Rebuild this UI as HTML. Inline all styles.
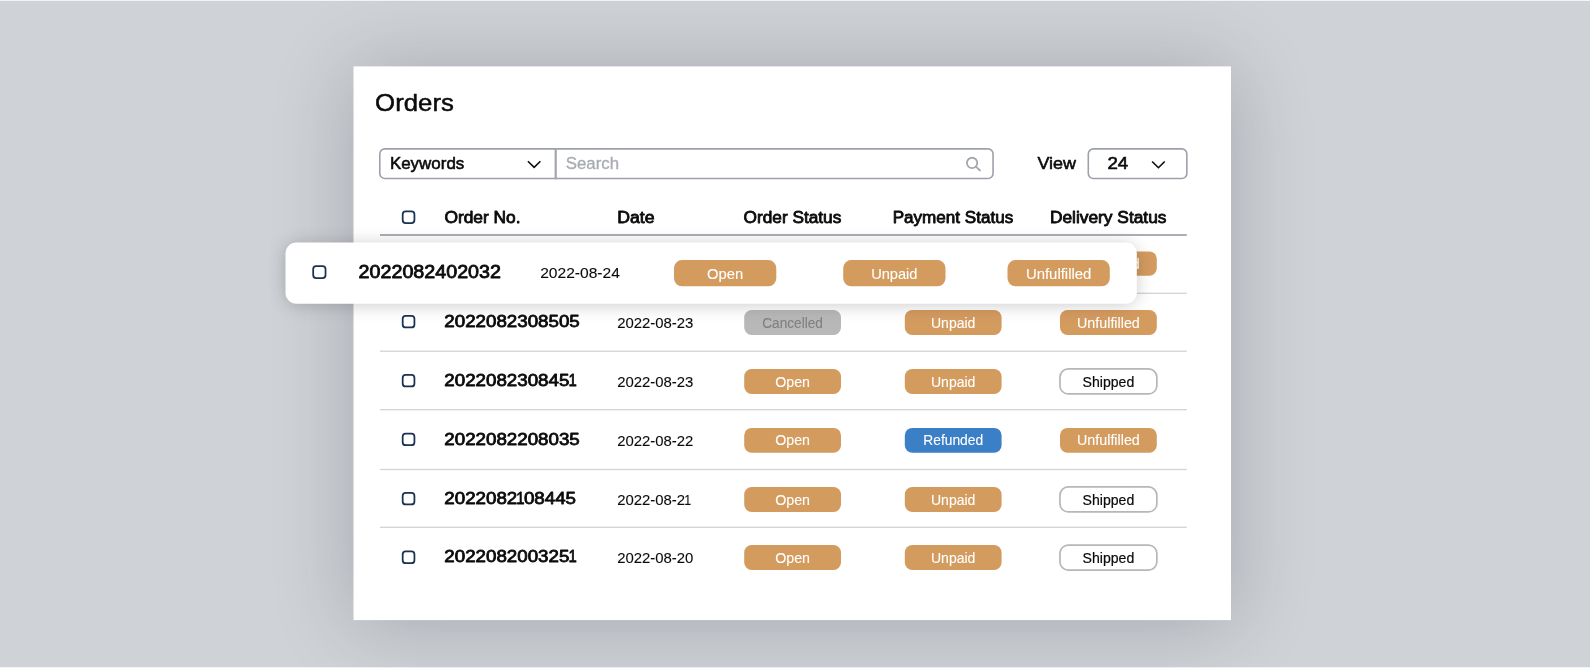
<!DOCTYPE html>
<html lang="en">
<head>
<meta charset="utf-8">
<title>Orders</title>
<style>
*{box-sizing:border-box;margin:0;padding:0}
html,body{width:1590px;height:668px;overflow:hidden}
body{background:#cfd2d6;font-family:"Liberation Sans",Arial,sans-serif;position:relative}
.card{position:absolute;left:354px;top:67px;width:877px;height:553px;background:#fff;box-shadow:0 3px 76px rgba(20,25,40,.225)}
.float{position:absolute;left:286px;top:243px;width:850px;height:60px;border-radius:11px;background:#fff;box-shadow:0 1.5px 18px rgba(0,0,0,.22)}
.edge{position:absolute;left:0;width:1590px;height:1px;background:#f2f3f5}
svg{will-change:transform;position:absolute;left:0;top:0;width:1590px;height:668px;font-family:"Liberation Sans",Arial,sans-serif;overflow:visible}
text{white-space:pre}
</style>
</head>
<body>
<div class="edge" style="top:0"></div><div class="edge" style="top:667px"></div>
<div class="card"></div>
<svg viewBox="0 0 1590 668" width="1590" height="668">
<rect x="353.5" y="66.4" width="877.5" height="553.7" fill="#fff"/>
<text x="375.1" y="110.65" font-size="24.5" fill="#0b0b0b" textLength="78.8" lengthAdjust="spacingAndGlyphs" stroke="#0b0b0b" stroke-width="0.5" stroke-linejoin="round">Orders</text>
<rect x="379.8" y="148.9" width="613.25" height="29.60" rx="5" fill="#fff" stroke="#9da1a9" stroke-width="1.6"/>
<rect x="554.6" y="148.1" width="2.2" height="31.20" fill="#a2a6ad"/>
<text x="389.9" y="168.61" font-size="16.84" fill="#0b0b0b" textLength="74.4" lengthAdjust="spacingAndGlyphs" stroke="#0b0b0b" stroke-width="0.58" stroke-linejoin="round">Keywords</text>
<path d="M527.90 161.30 L534.15 167.40 L540.40 161.30" fill="none" stroke="#0b0b0b" stroke-width="1.6" stroke-linecap="butt" stroke-linejoin="miter"/>
<text x="565.8" y="168.72" font-size="17.16" fill="#a9acb3" textLength="53.3" lengthAdjust="spacingAndGlyphs" stroke="#a9acb3" stroke-width="0.35" stroke-linejoin="round">Search</text>
<circle cx="972.1" cy="162.9" r="5.15" fill="none" stroke="#a3a7ae" stroke-width="1.8"/><path d="M975.9 166.6 L980 170.5" stroke="#a3a7ae" stroke-width="1.8" stroke-linecap="round"/>
<text x="1037.4" y="168.61" font-size="16.84" fill="#0b0b0b" textLength="38.6" lengthAdjust="spacingAndGlyphs" stroke="#0b0b0b" stroke-width="0.58" stroke-linejoin="round">View</text>
<rect x="1088.3" y="148.9" width="98.55" height="29.60" rx="5" fill="#fff" stroke="#9da1a9" stroke-width="1.6"/>
<text x="1107.4" y="168.61" font-size="16.84" fill="#0b0b0b" textLength="20.8" lengthAdjust="spacingAndGlyphs" stroke="#0b0b0b" stroke-width="0.58" stroke-linejoin="round">24</text>
<path d="M1152.10 161.50 L1158.40 167.70 L1164.70 161.50" fill="none" stroke="#0b0b0b" stroke-width="1.6" stroke-linecap="butt" stroke-linejoin="miter"/>
<rect x="402.68" y="211.47" width="11.75" height="11.65" rx="3" fill="#fff" stroke="#183252" stroke-width="1.75"/>
<text x="444.4" y="222.7" font-size="16.18" fill="#0b0b0b" textLength="76.2" lengthAdjust="spacingAndGlyphs" stroke="#0b0b0b" stroke-width="0.8" stroke-linejoin="round">Order No.</text>
<text x="617.2" y="222.7" font-size="16.18" fill="#0b0b0b" textLength="37.3" lengthAdjust="spacingAndGlyphs" stroke="#0b0b0b" stroke-width="0.8" stroke-linejoin="round">Date</text>
<text x="743.6" y="222.7" font-size="16.18" fill="#0b0b0b" textLength="97.7" lengthAdjust="spacingAndGlyphs" stroke="#0b0b0b" stroke-width="0.8" stroke-linejoin="round">Order Status</text>
<text x="892.7" y="222.7" font-size="16.18" fill="#0b0b0b" textLength="120.6" lengthAdjust="spacingAndGlyphs" stroke="#0b0b0b" stroke-width="0.8" stroke-linejoin="round">Payment Status</text>
<text x="1049.9" y="222.7" font-size="16.18" fill="#0b0b0b" textLength="116.6" lengthAdjust="spacingAndGlyphs" stroke="#0b0b0b" stroke-width="0.8" stroke-linejoin="round">Delivery Status</text>
<rect x="380" y="234.20" width="806.80" height="1.6" fill="#969ba3"/>
<rect x="380" y="292.65" width="806.80" height="1.3" fill="#d2d3d5"/>
<rect x="380" y="350.55" width="806.80" height="1.3" fill="#d2d3d5"/>
<rect x="380" y="409.05" width="806.80" height="1.3" fill="#d2d3d5"/>
<rect x="380" y="468.85" width="806.80" height="1.3" fill="#d2d3d5"/>
<rect x="380" y="526.65" width="806.80" height="1.3" fill="#d2d3d5"/>
<rect x="1060.0" y="251.4" width="96.8" height="24.4" rx="7.5" fill="#d49b5f"/><text x="1108.40" y="268.6" font-size="13.71" fill="#fff" text-anchor="middle" textLength="62.800000000000004" lengthAdjust="spacingAndGlyphs" stroke="#fff" stroke-width="0.1" stroke-linejoin="round">Unfulfilled</text>
<rect x="402.68" y="315.77" width="11.75" height="11.65" rx="3" fill="#fff" stroke="#183252" stroke-width="1.75"/>
<text y="327.4" font-size="16.88" fill="#0b0b0b" stroke="#0b0b0b" stroke-width="0.8" stroke-linejoin="round"><tspan x="444.30" textLength="135.46" lengthAdjust="spacingAndGlyphs">2022082308505</tspan></text>
<text y="328.25" font-size="14.66" fill="#0b0b0b" stroke="#0b0b0b" stroke-width="0.1" stroke-linejoin="round"><tspan x="617.20" textLength="76.20" lengthAdjust="spacingAndGlyphs">2022-08-23</tspan></text>
<rect x="744.2" y="310.0" width="96.8" height="24.9" rx="7.5" fill="#b8b8b8"/><text x="792.60" y="327.55" font-size="13.71" fill="#808080" text-anchor="middle" textLength="60.800000000000004" lengthAdjust="spacingAndGlyphs" stroke="#808080" stroke-width="0.1" stroke-linejoin="round">Cancelled</text>
<rect x="904.8" y="310.0" width="96.8" height="24.9" rx="7.5" fill="#d49b5f"/><text x="953.20" y="327.55" font-size="13.71" fill="#fff" text-anchor="middle" textLength="44.4" lengthAdjust="spacingAndGlyphs" stroke="#fff" stroke-width="0.1" stroke-linejoin="round">Unpaid</text>
<rect x="1060.0" y="310.0" width="96.8" height="24.9" rx="7.5" fill="#d49b5f"/><text x="1108.40" y="327.55" font-size="13.71" fill="#fff" text-anchor="middle" textLength="62.800000000000004" lengthAdjust="spacingAndGlyphs" stroke="#fff" stroke-width="0.1" stroke-linejoin="round">Unfulfilled</text>
<rect x="402.68" y="374.77" width="11.75" height="11.65" rx="3" fill="#fff" stroke="#183252" stroke-width="1.75"/>
<text y="385.8" font-size="16.88" fill="#0b0b0b" stroke="#0b0b0b" stroke-width="0.8" stroke-linejoin="round"><tspan x="444.30" textLength="125.04" lengthAdjust="spacingAndGlyphs">202208230845</tspan><tspan x="568.44" textLength="8.30" lengthAdjust="spacingAndGlyphs">1</tspan></text>
<text y="387.25" font-size="14.66" fill="#0b0b0b" stroke="#0b0b0b" stroke-width="0.1" stroke-linejoin="round"><tspan x="617.20" textLength="76.20" lengthAdjust="spacingAndGlyphs">2022-08-23</tspan></text>
<rect x="744.2" y="369.0" width="96.8" height="24.9" rx="7.5" fill="#d49b5f"/><text x="792.60" y="386.55" font-size="13.71" fill="#fff" text-anchor="middle" textLength="34.800000000000004" lengthAdjust="spacingAndGlyphs" stroke="#fff" stroke-width="0.1" stroke-linejoin="round">Open</text>
<rect x="904.8" y="369.0" width="96.8" height="24.9" rx="7.5" fill="#d49b5f"/><text x="953.20" y="386.55" font-size="13.71" fill="#fff" text-anchor="middle" textLength="44.4" lengthAdjust="spacingAndGlyphs" stroke="#fff" stroke-width="0.1" stroke-linejoin="round">Unpaid</text>
<rect x="1059.95" y="368.95" width="96.90" height="25.00" rx="8.3" fill="#fff" stroke="#b7b7b7" stroke-width="1.7"/><text x="1108.40" y="387.0" font-size="14.32" fill="#0b0b0b" text-anchor="middle" textLength="51.7" lengthAdjust="spacingAndGlyphs" stroke="#0b0b0b" stroke-width="0.2" stroke-linejoin="round">Shipped</text>
<rect x="402.68" y="433.57" width="11.75" height="11.65" rx="3" fill="#fff" stroke="#183252" stroke-width="1.75"/>
<text y="444.7" font-size="16.88" fill="#0b0b0b" stroke="#0b0b0b" stroke-width="0.8" stroke-linejoin="round"><tspan x="444.30" textLength="135.46" lengthAdjust="spacingAndGlyphs">2022082208035</tspan></text>
<text y="445.75" font-size="14.66" fill="#0b0b0b" stroke="#0b0b0b" stroke-width="0.1" stroke-linejoin="round"><tspan x="617.20" textLength="76.20" lengthAdjust="spacingAndGlyphs">2022-08-22</tspan></text>
<rect x="744.2" y="427.9" width="96.8" height="24.9" rx="7.5" fill="#d49b5f"/><text x="792.60" y="445.45" font-size="13.71" fill="#fff" text-anchor="middle" textLength="34.800000000000004" lengthAdjust="spacingAndGlyphs" stroke="#fff" stroke-width="0.1" stroke-linejoin="round">Open</text>
<rect x="904.8" y="427.9" width="96.8" height="24.9" rx="7.5" fill="#3b7fc6"/><text x="953.20" y="445.45" font-size="13.71" fill="#fff" text-anchor="middle" textLength="59.9" lengthAdjust="spacingAndGlyphs" stroke="#fff" stroke-width="0.1" stroke-linejoin="round">Refunded</text>
<rect x="1060.0" y="427.9" width="96.8" height="24.9" rx="7.5" fill="#d49b5f"/><text x="1108.40" y="445.45" font-size="13.71" fill="#fff" text-anchor="middle" textLength="62.800000000000004" lengthAdjust="spacingAndGlyphs" stroke="#fff" stroke-width="0.1" stroke-linejoin="round">Unfulfilled</text>
<rect x="402.68" y="492.77" width="11.75" height="11.65" rx="3" fill="#fff" stroke="#183252" stroke-width="1.75"/>
<text y="503.6" font-size="16.88" fill="#0b0b0b" stroke="#0b0b0b" stroke-width="0.8" stroke-linejoin="round"><tspan x="444.30" textLength="72.94" lengthAdjust="spacingAndGlyphs">2022082</tspan><tspan x="516.34" textLength="8.30" lengthAdjust="spacingAndGlyphs">1</tspan><tspan x="523.94" textLength="52.10" lengthAdjust="spacingAndGlyphs">08445</tspan></text>
<text y="505.15" font-size="14.66" fill="#0b0b0b" stroke="#0b0b0b" stroke-width="0.1" stroke-linejoin="round"><tspan x="617.20" textLength="67.92" lengthAdjust="spacingAndGlyphs">2022-08-2</tspan><tspan x="684.22" textLength="6.90" lengthAdjust="spacingAndGlyphs">1</tspan></text>
<rect x="744.2" y="487.0" width="96.8" height="24.9" rx="7.5" fill="#d49b5f"/><text x="792.60" y="504.55" font-size="13.71" fill="#fff" text-anchor="middle" textLength="34.800000000000004" lengthAdjust="spacingAndGlyphs" stroke="#fff" stroke-width="0.1" stroke-linejoin="round">Open</text>
<rect x="904.8" y="487.0" width="96.8" height="24.9" rx="7.5" fill="#d49b5f"/><text x="953.20" y="504.55" font-size="13.71" fill="#fff" text-anchor="middle" textLength="44.4" lengthAdjust="spacingAndGlyphs" stroke="#fff" stroke-width="0.1" stroke-linejoin="round">Unpaid</text>
<rect x="1059.95" y="486.95" width="96.90" height="25.00" rx="8.3" fill="#fff" stroke="#b7b7b7" stroke-width="1.7"/><text x="1108.40" y="505.0" font-size="14.32" fill="#0b0b0b" text-anchor="middle" textLength="51.7" lengthAdjust="spacingAndGlyphs" stroke="#0b0b0b" stroke-width="0.2" stroke-linejoin="round">Shipped</text>
<rect x="402.68" y="551.48" width="11.75" height="11.65" rx="3" fill="#fff" stroke="#183252" stroke-width="1.75"/>
<text y="562.0" font-size="16.88" fill="#0b0b0b" stroke="#0b0b0b" stroke-width="0.8" stroke-linejoin="round"><tspan x="444.30" textLength="125.04" lengthAdjust="spacingAndGlyphs">202208200325</tspan><tspan x="568.44" textLength="8.30" lengthAdjust="spacingAndGlyphs">1</tspan></text>
<text y="563.35" font-size="14.66" fill="#0b0b0b" stroke="#0b0b0b" stroke-width="0.1" stroke-linejoin="round"><tspan x="617.20" textLength="76.20" lengthAdjust="spacingAndGlyphs">2022-08-20</tspan></text>
<rect x="744.2" y="545.1" width="96.8" height="24.9" rx="7.5" fill="#d49b5f"/><text x="792.60" y="562.65" font-size="13.71" fill="#fff" text-anchor="middle" textLength="34.800000000000004" lengthAdjust="spacingAndGlyphs" stroke="#fff" stroke-width="0.1" stroke-linejoin="round">Open</text>
<rect x="904.8" y="545.1" width="96.8" height="24.9" rx="7.5" fill="#d49b5f"/><text x="953.20" y="562.65" font-size="13.71" fill="#fff" text-anchor="middle" textLength="44.4" lengthAdjust="spacingAndGlyphs" stroke="#fff" stroke-width="0.1" stroke-linejoin="round">Unpaid</text>
<rect x="1059.95" y="545.05" width="96.90" height="25.00" rx="8.3" fill="#fff" stroke="#b7b7b7" stroke-width="1.7"/><text x="1108.40" y="563.1" font-size="14.32" fill="#0b0b0b" text-anchor="middle" textLength="51.7" lengthAdjust="spacingAndGlyphs" stroke="#0b0b0b" stroke-width="0.2" stroke-linejoin="round">Shipped</text>
</svg>
<div class="float"></div>
<svg viewBox="0 0 1590 668" width="1590" height="668">
<rect x="285.5" y="242.5" width="851.3" height="61.2" rx="11" fill="#fff"/>
<rect x="313.18" y="266.07" width="12.35" height="11.95" rx="3" fill="#fff" stroke="#183252" stroke-width="1.75"/>
<text x="358.6" y="278.3" font-size="17.78" fill="#0b0b0b" textLength="142.4" lengthAdjust="spacingAndGlyphs" stroke="#0b0b0b" stroke-width="0.8" stroke-linejoin="round">2022082402032</text>
<text x="540.2" y="278.25" font-size="14.76" fill="#0b0b0b" textLength="79.7" lengthAdjust="spacingAndGlyphs" stroke="#0b0b0b" stroke-width="0.1" stroke-linejoin="round">2022-08-24</text>
<rect x="674.0" y="260.1" width="102.3" height="26.2" rx="8" fill="#d49b5f"/><text x="725.15" y="278.57" font-size="14.36" fill="#fff" text-anchor="middle" textLength="36.2" lengthAdjust="spacingAndGlyphs" stroke="#fff" stroke-width="0.1" stroke-linejoin="round">Open</text>
<rect x="843.2" y="260.1" width="102.3" height="26.2" rx="8" fill="#d49b5f"/><text x="894.35" y="278.57" font-size="14.36" fill="#fff" text-anchor="middle" textLength="46.3" lengthAdjust="spacingAndGlyphs" stroke="#fff" stroke-width="0.1" stroke-linejoin="round">Unpaid</text>
<rect x="1007.5" y="260.1" width="102.3" height="26.2" rx="8" fill="#d49b5f"/><text x="1058.65" y="278.57" font-size="14.36" fill="#fff" text-anchor="middle" textLength="65.5" lengthAdjust="spacingAndGlyphs" stroke="#fff" stroke-width="0.1" stroke-linejoin="round">Unfulfilled</text>
</svg>
</body>
</html>
